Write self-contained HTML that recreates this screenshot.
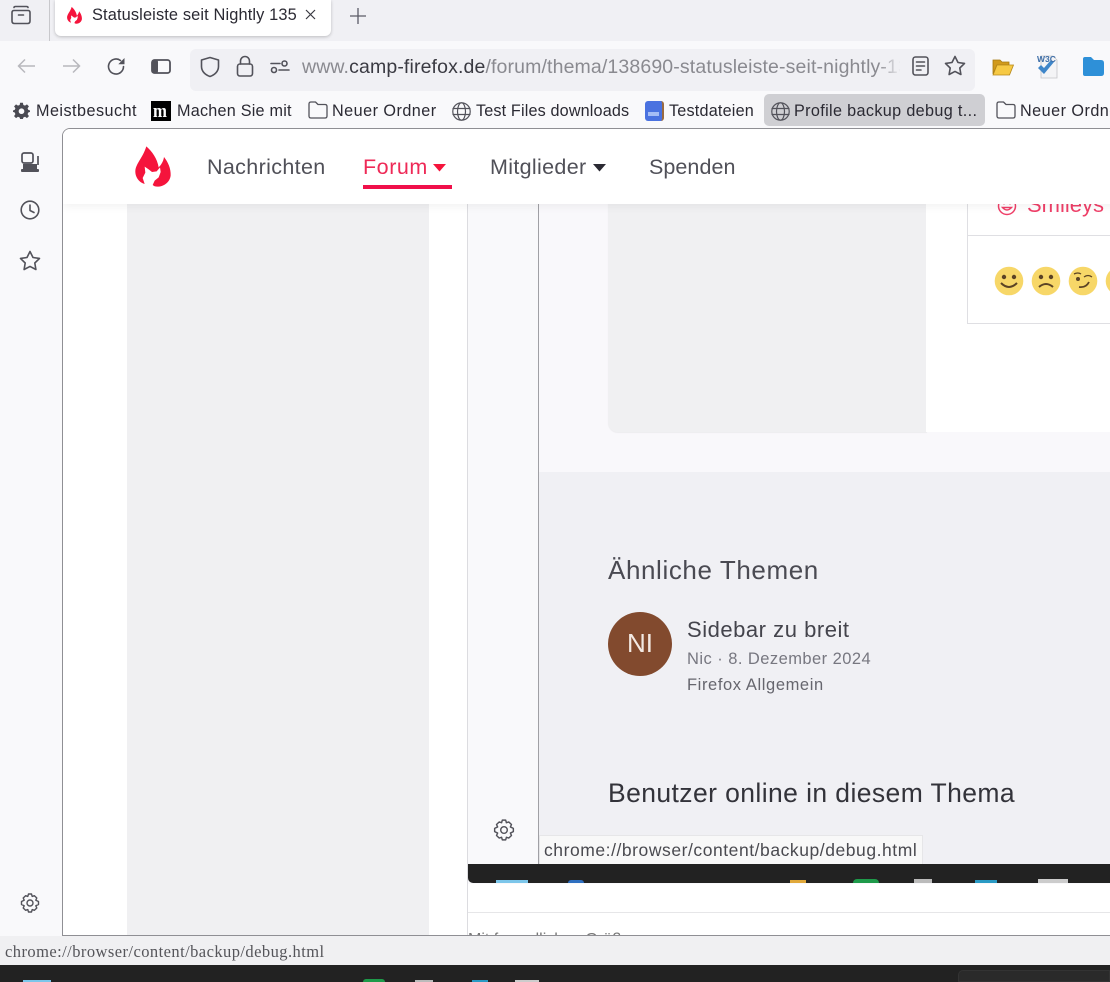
<!DOCTYPE html>
<html lang="de"><head><meta charset="utf-8"><title>Statusleiste seit Nightly 135</title>
<style>
html,body{margin:0;padding:0;width:1110px;height:982px;overflow:hidden;background:#f9f9fb}
*{box-sizing:border-box}
.a{position:absolute}
.t{position:absolute;white-space:nowrap;font-family:"Liberation Sans",sans-serif;line-height:1}
svg{position:absolute;overflow:visible}
.i{fill:none;stroke:#52525a;stroke-width:1.6;stroke-linecap:round;stroke-linejoin:round}
</style></head><body>
<div id="root" class="a" style="left:0;top:0;width:1110px;height:982px;overflow:hidden">
<!-- tab strip -->
<div class="a" style="left:0;top:0;width:1110px;height:41px;background:#f0f0f4"></div>
<svg style="left:11px;top:5px" width="20" height="20" viewBox="0 0 20 20"><path class="i" d="M1 7.5 V16 Q1 18.5 3.5 18.5 H16.5 Q19 18.5 19 16 V7.5 Q19 5.5 17 5.5 H3 Q1 5.5 1 7.5Z M3 2.5 Q3 1.5 4.5 1.5 H15.5 Q17 1.5 17 2.5 M7.5 10 H12.5"/></svg>
<div class="a" style="left:49px;top:0;width:1px;height:41px;background:#c8c8cc"></div>
<div class="a" style="left:55px;top:0;width:276px;height:36px;background:#fff;border-radius:0 0 6px 6px;box-shadow:0 1px 3px rgba(0,0,0,.22)"></div>
<svg style="left:64px;top:5px" width="21" height="21" viewBox="0 0 150 150"><path fill="#f5143c" d="M55 13C72 28 88 50 92 76C100 68 106 58 108 45C120 60 129 80 128 100C126 120 108 134 88 134C82 134 77 132 74 129L80 116L92 106L98 90L96 76L86 88L72 90L62 82L50 74L52 92L44 108L50 126C34 122 21 106 22 86C24 64 44 48 55 13Z"/></svg>
<div class="t" style="left:92px;top:7px;font-size:16.4px;color:#2b2a33;letter-spacing:.12px;width:206px;overflow:hidden;height:18px">Statusleiste seit Nightly 135</div>
<svg style="left:305px;top:9px" width="11" height="11" viewBox="0 0 11 11"><path d="M1 1L10 10M10 1L1 10" stroke="#3a3a42" stroke-width="1.2"/></svg>
<svg style="left:350px;top:8px" width="16" height="16" viewBox="0 0 16 16"><path d="M8 0V16M0 8H16" stroke="#5b5b66" stroke-width="1.3"/></svg>

<!-- nav toolbar -->
<div class="a" style="left:0;top:41px;width:1110px;height:51px;background:#f9f9fb"></div>
<svg style="left:17px;top:58px" width="19" height="16" viewBox="0 0 19 16"><path d="M18 8H1.5M8 1.5L1.5 8L8 14.5" fill="none" stroke="#b8b8bd" stroke-width="1.5"/></svg>
<svg style="left:62px;top:58px" width="19" height="16" viewBox="0 0 19 16"><path d="M1 8H17.5M11 1.5L17.5 8L11 14.5" fill="none" stroke="#b8b8bd" stroke-width="1.5"/></svg>
<svg style="left:107px;top:57px" width="19" height="19" viewBox="0 0 19 19"><path class="i" d="M16.5 9.5A7.5 7.5 0 1 1 13.5 3.5"/><path d="M17.5 1V7.2H11.3Z" fill="#52525a"/></svg>
<svg style="left:151px;top:59px" width="20" height="15" viewBox="0 0 20 15"><rect x="1" y="1" width="18" height="13" rx="2.5" fill="#f9f9fb" stroke="#52525a" stroke-width="1.8"/><rect x="1" y="1" width="6" height="13" rx="2" fill="#52525a"/></svg>
<!-- urlbar -->
<div class="a" style="left:190px;top:49px;width:785px;height:42px;background:#f0f0f4;border-radius:6px"></div>
<svg style="left:200px;top:56px" width="20" height="22" viewBox="0 0 20 22"><path class="i" d="M10 1.5L18.5 4V10.5C18.5 15.5 14.5 19 10 20.5C5.5 19 1.5 15.5 1.5 10.500V4Z"/></svg>
<svg style="left:236px;top:55px" width="18" height="22" viewBox="0 0 18 22"><rect x="1.5" y="9" width="15" height="12" rx="2.500" class="i"/><path class="i" d="M4.500 9V6A4.500 4.500 0 0 1 13.500 6V9"/></svg>
<svg style="left:270px;top:59px" width="20" height="16" viewBox="0 0 20 16"><circle cx="14.500" cy="4.500" r="2.500" class="i"/><circle cx="4" cy="11" r="2.500" class="i"/><path class="i" d="M1 4.500H10M9 11H19"/></svg>
<div class="t" style="left:302px;top:58px;width:598px;height:23px;overflow:hidden;font-size:19.5px;color:#8a8a90;letter-spacing:.13px">www.<span style="color:#3a3a42">camp-firefox.de</span>/forum/thema/138690-statusleiste-seit-nightly-135-nicht-mehr-sichtbar</div>
<div class="a" style="left:878px;top:52px;width:23px;height:36px;background:linear-gradient(90deg,rgba(240,240,244,0),#f0f0f4)"></div>
<svg style="left:912px;top:56px" width="17" height="20" viewBox="0 0 17 20"><rect x="1" y="1" width="15" height="18" rx="2.500" class="i"/><path class="i" d="M4.500 6H12.500M4.500 10H12.500M4.500 14H9"/></svg>
<svg style="left:944px;top:55px" width="22" height="21" viewBox="0 0 22 21"><path class="i" d="M11 1.500L14 7.500L20.500 8.400L15.800 13L16.900 19.500L11 16.400L5.100 19.500L6.200 13L1.500 8.400L8 7.500Z"/></svg>
<svg style="left:992px;top:57px" width="22" height="19" viewBox="0 0 22 19"><path d="M1 3H8L10 5H17V8H5L1 17Z" fill="#d19a1c" stroke="#a67a10" stroke-width=".8"/><path d="M5 8H21.500L17.500 18H1Z" fill="#f6c944" stroke="#b5871a" stroke-width=".8"/></svg>
<svg style="left:1036px;top:54px" width="22" height="24" viewBox="0 0 22 24"><path d="M5 2H17L21 6V24H5Z" fill="#f4f4f6" stroke="#c4c4c8" stroke-width=".8"/><path d="M2 14L8 20L18 8L15 6L8 14L5 11Z" fill="#3f86c9"/></svg>
<div class="t" style="left:1037px;top:55px;font-size:8.500px;font-weight:bold;color:#3f6fa8">W3C</div>
<svg style="left:1082px;top:56px" width="22" height="20" viewBox="0 0 22 20"><path d="M1 3Q1 1 3 1H9L12 4H19Q22 4 22 7V17Q22 20 19 20H3Q1 20 1 18Z" fill="#2e90d8"/></svg>

<!-- bookmarks -->
<svg style="left:13px;top:102px" width="17" height="17" viewBox="0 0 24 24"><path fill="#4a4a52" d="M10 1H14L14.600 4.200L17 5.200L19.700 3.300L22.500 6.100L20.600 8.800L21.600 11.200L24 12V14L21.600 14.800L20.600 17.200L22.500 19.900L19.700 22.700L17 20.800L14.600 21.800L14 24H10L9.400 21.800L7 20.800L4.300 22.700L1.500 19.900L3.400 17.200L2.400 14.800L0 14V12L2.400 11.200L3.400 8.800L1.500 6.100L4.300 3.300L7 5.200L9.400 4.200ZM12 9A4 4 0 1 0 12 17A4 4 0 1 0 12 9Z"/></svg>
<div class="t" style="left:36px;top:103px;font-size:16.200px;color:#2b2a33;letter-spacing:.47px">Meistbesucht</div>
<div class="a" style="left:151px;top:101px;width:20px;height:20px;background:#000"></div>
<div class="t" style="left:153px;top:102px;font-family:'Liberation Serif',serif;font-weight:bold;font-size:19px;color:#fff;transform:scaleX(.88);transform-origin:left">m</div>
<div class="t" style="left:177px;top:103px;font-size:16.200px;color:#2b2a33;letter-spacing:.23px">Machen Sie mit</div>
<svg style="left:308px;top:101px" width="20" height="18" viewBox="0 0 20 18"><path class="i" style="stroke-width:1.300" d="M1 3Q1 1 3 1H7.500L10 3.500H17Q19 3.500 19 5.500V15Q19 17 17 17H3Q1 17 1 15Z"/></svg>
<div class="t" style="left:332px;top:103px;font-size:16.200px;color:#2b2a33;letter-spacing:.47px">Neuer Ordner</div>
<svg style="left:452px;top:102px" width="19" height="19" viewBox="0 0 19 19"><g class="i" style="stroke-width:1.200"><circle cx="9.500" cy="9.500" r="8.700"/><ellipse cx="9.500" cy="9.500" rx="4" ry="8.700"/><path d="M1 6.500H18M1 12.500H18"/></g></svg>
<div class="t" style="left:476px;top:103px;font-size:16.200px;color:#2b2a33;letter-spacing:.15px">Test Files downloads</div>
<div class="a" style="left:645px;top:101px;width:19px;height:20px;background:#4a72e0;border-radius:3px;border-right:2px solid #9a6a40"></div>
<div class="a" style="left:648px;top:112px;width:11px;height:4px;background:#a5bdf5"></div>
<div class="t" style="left:669px;top:103px;font-size:16.200px;color:#2b2a33;letter-spacing:.2px">Testdateien</div>
<div class="a" style="left:764px;top:94px;width:221px;height:32px;background:#cfcfd3;border-radius:5px"></div>
<svg style="left:771px;top:102px" width="19" height="19" viewBox="0 0 19 19"><g class="i" style="stroke-width:1.200"><circle cx="9.500" cy="9.500" r="8.700"/><ellipse cx="9.500" cy="9.500" rx="4" ry="8.700"/><path d="M1 6.500H18M1 12.500H18"/></g></svg>
<div class="t" style="left:794px;top:103px;font-size:16.200px;color:#2b2a33;letter-spacing:.35px">Profile backup debug t...</div>
<svg style="left:996px;top:101px" width="20" height="18" viewBox="0 0 20 18"><path class="i" style="stroke-width:1.300" d="M1 3Q1 1 3 1H7.500L10 3.500H17Q19 3.500 19 5.500V15Q19 17 17 17H3Q1 17 1 15Z"/></svg>
<div class="t" style="left:1020px;top:103px;font-size:16.200px;color:#2b2a33;letter-spacing:.47px">Neuer Ordner</div>

<!-- outer sidebar -->
<div class="a" style="left:0;top:128px;width:62px;height:807px;background:#f9f9fb"></div>
<svg style="left:20px;top:151px" width="20" height="22" viewBox="0 0 20 22"><rect x="2" y="2" width="11" height="10" rx="2" class="i" style="stroke-width:1.700"/><path d="M18 5V14" stroke="#52525a" stroke-width="1.700"/><rect x="3" y="13" width="14" height="6" fill="#52525a"/><rect x="1" y="18" width="18" height="3" rx="1" fill="#52525a"/></svg>
<svg style="left:20px;top:200px" width="20" height="20" viewBox="0 0 20 20"><circle cx="10" cy="10" r="8.800" class="i"/><path class="i" d="M10 5V10.500L14 12.500"/></svg>
<svg style="left:19px;top:250px" width="22" height="21" viewBox="0 0 22 21"><path class="i" d="M11 1.500L14 7.500L20.500 8.400L15.800 13L16.900 19.500L11 16.400L5.100 19.500L6.200 13L1.500 8.400L8 7.500Z"/></svg>
<svg style="left:20px;top:893px" width="20" height="20" viewBox="0 0 20 20"><circle cx="10" cy="10" r="3" class="i" style="stroke-width:1.400"/><path class="i" style="stroke-width:1.400" d="M8.500 1H11.500L12.200 3.400L14.400 2.700L16.800 5L15.800 7.200L18.500 8.500V11.500L15.800 12.800L16.800 15L14.400 17.300L12.200 16.600L11.500 19H8.500L7.800 16.600L5.600 17.300L3.200 15L4.200 12.800L1.500 11.500V8.500L4.200 7.200L3.200 5L5.600 2.700L7.800 3.400Z"/></svg>

<!-- browser content -->
<div class="a" id="content" style="left:62px;top:128px;width:1060px;height:808px;background:#fff;border:1px solid #8f8f94;border-radius:8px 0 0 0;overflow:hidden">
  <div class="a" style="left:64px;top:75px;width:302px;height:740px;background:#f0f0f2"></div>
  <!-- embedded screenshot -->
  <div class="a" style="left:404px;top:75px;width:660px;height:680px;background:#f9f9fb"></div>
  <div class="a" style="left:404px;top:75px;width:1px;height:740px;background:#dcdce0"></div>
  <div class="a" style="left:475px;top:75px;width:1px;height:660px;background:#a0a0a5"></div>
  <div class="a" style="left:476px;top:75px;width:600px;height:268px;background:#f9f8fb"></div>
  <div class="a" style="left:545px;top:60px;width:319px;height:243px;background:#f0f0f2;border-radius:0 0 0 10px;box-shadow:0 1px 1px rgba(0,0,0,.05)"></div>
  <div class="a" style="left:863px;top:60px;width:200px;height:243px;background:#fff"></div>
  <div class="a" style="left:904px;top:60px;width:200px;height:135px;border:1px solid #dfdfe3;background:#fff"></div>
  <div class="a" style="left:904px;top:106px;width:200px;height:1px;background:#dfdfe3"></div>
  <svg style="left:934px;top:67px" width="20" height="20" viewBox="0 0 20 20"><circle cx="10" cy="10" r="8.500" fill="none" stroke="#ef3f68" stroke-width="1.500"/><path d="M5.500 11.500Q10 16.500 14.500 11.500Z" fill="none" stroke="#ef3f68" stroke-width="1.400"/><circle cx="7" cy="7.500" r="1" fill="#ef3f68"/><circle cx="13" cy="7.500" r="1" fill="#ef3f68"/></svg>
  <div class="t" style="left:964px;top:65px;font-size:22px;color:#ef3f68;letter-spacing:0">Smileys</div>
  <svg style="left:931px;top:137px" width="120" height="30" viewBox="0 0 120 30">
    <circle cx="15" cy="15" r="14.300" fill="#f7d768"/><circle cx="10" cy="11" r="2.200" fill="#5b4325"/><circle cx="20" cy="11" r="2.200" fill="#5b4325"/><path d="M7 17Q15 25 23 17" fill="none" stroke="#5b4325" stroke-width="2"/>
    <circle cx="52" cy="15" r="14.300" fill="#f7d768"/><circle cx="47" cy="11" r="2.200" fill="#5b4325"/><circle cx="57" cy="11" r="2.200" fill="#5b4325"/><path d="M45 21Q52 15 59 21" fill="none" stroke="#5b4325" stroke-width="2"/>
    <circle cx="89" cy="15" r="14.300" fill="#f7d768"/><circle cx="84" cy="13" r="2" fill="#5b4325"/><path d="M90 11Q94 8 98 11M80 8Q84 6 87 8" fill="none" stroke="#5b4325" stroke-width="1.300"/><path d="M85 21Q92 22 95 16" fill="none" stroke="#5b4325" stroke-width="1.800"/>
    <circle cx="126" cy="15" r="14.300" fill="#f7d768"/>
  </svg>
  <div class="a" style="left:476px;top:343px;width:600px;height:392px;background:#f0f0f4"></div>
  <div class="t" style="left:545px;top:428px;font-size:26px;color:#4a4a52;letter-spacing:.6px">Ähnliche Themen</div>
  <div class="a" style="left:545px;top:483px;width:64px;height:64px;border-radius:50%;background:#824a2e"></div>
  <div class="t" style="left:564px;top:501px;font-size:26px;color:#f3e9e3">NI</div>
  <div class="t" style="left:624px;top:490px;font-size:22px;color:#44444c;letter-spacing:.53px">Sidebar zu breit</div>
  <div class="t" style="left:624px;top:522px;font-size:16.500px;color:#777780;letter-spacing:.45px">Nic · 8. Dezember 2024</div>
  <div class="t" style="left:624px;top:548px;font-size:16.500px;color:#66666e;letter-spacing:.6px">Firefox Allgemein</div>
  <div class="t" style="left:545px;top:651px;font-size:26.500px;color:#33333a;letter-spacing:.41px">Benutzer online in diesem Thema</div>
  <svg style="left:430px;top:690px" width="22" height="22" viewBox="0 0 20 20"><circle cx="10" cy="10" r="3" class="i" style="stroke-width:1.300"/><path class="i" style="stroke-width:1.300" d="M8.500 1H11.500L12.200 3.400L14.400 2.700L16.800 5L15.800 7.200L18.500 8.500V11.500L15.800 12.800L16.800 15L14.400 17.300L12.200 16.600L11.500 19H8.500L7.800 16.600L5.600 17.300L3.200 15L4.200 12.800L1.500 11.500V8.500L4.200 7.200L3.200 5L5.600 2.700L7.800 3.400Z"/></svg>
  <div class="a" style="left:476px;top:706px;width:384px;height:29px;background:#f8f8f8;border:1px solid #e6e6e8;border-bottom:0"></div>
  <div class="t" style="left:481px;top:713px;font-size:17.500px;color:#4a4a50;letter-spacing:.55px">chrome://browser/content/backup/debug.html</div>
  <div class="a" style="left:405px;top:735px;width:660px;height:19px;background:#222;border-radius:0 0 0 5px;overflow:hidden">
    <div class="a" style="left:28px;top:16px;width:32px;height:6px;background:#7cc6ea"></div>
    <div class="a" style="left:100px;top:16px;width:16px;height:6px;border-radius:8px;background:#2e6fc0"></div>
    <div class="a" style="left:322px;top:16px;width:16px;height:6px;background:#e0a83a"></div>
    <div class="a" style="left:385px;top:15px;width:26px;height:8px;border-radius:13px;background:#1e9a4a"></div>
    <div class="a" style="left:446px;top:15px;width:18px;height:8px;background:#bbb"></div>
    <div class="a" style="left:507px;top:16px;width:22px;height:5px;background:#2a9ac4"></div>
    <div class="a" style="left:570px;top:15px;width:30px;height:8px;background:#ccc"></div>
  </div>
  <div class="a" style="left:405px;top:783px;width:660px;height:1px;background:#e6e6e8"></div>
  <div class="t" style="left:405px;top:803px;font-size:16px;color:#777">Mit freundlichen Grüßen</div>
  <!-- sticky header -->
  <div class="a" style="left:0;top:0;width:1060px;height:75px;background:#fff;box-shadow:0 3px 8px rgba(0,0,0,.05)"></div>
  <svg style="left:65px;top:13px" width="50" height="50" viewBox="0 0 150 150"><path fill="#f5143c" d="M55 13C72 28 88 50 92 76C100 68 106 58 108 45C120 60 129 80 128 100C126 120 108 134 88 134C82 134 77 132 74 129L80 116L92 106L98 90L96 76L86 88L72 90L62 82L50 74L52 92L44 108L50 126C34 122 21 106 22 86C24 64 44 48 55 13Z"/></svg>
  <div class="t" style="left:144px;top:28px;font-size:21.500px;color:#505058;letter-spacing:.35px">Nachrichten</div>
  <div class="t" style="left:300px;top:28px;font-size:21.500px;color:#ee2a57;letter-spacing:.55px">Forum</div>
  <svg style="left:370px;top:35px" width="13" height="8" viewBox="0 0 13 8"><path d="M0 0H13L6.500 7.500Z" fill="#f5143c"/></svg>
  <div class="a" style="left:300px;top:56px;width:89px;height:3.500px;background:#f0104a"></div>
  <div class="t" style="left:427px;top:28px;font-size:21.500px;color:#505058;letter-spacing:.33px">Mitglieder</div>
  <svg style="left:530px;top:35px" width="13" height="8" viewBox="0 0 13 8"><path d="M0 0H13L6.500 7.500Z" fill="#2b2a33"/></svg>
  <div class="t" style="left:586px;top:28px;font-size:21.500px;color:#505058;letter-spacing:.06px">Spenden</div>
</div>

<!-- status -->
<div class="a" style="left:0;top:936px;width:1110px;height:29px;background:#f0f0f2"></div>
<div class="t" style="left:5px;top:944px;font-family:'Liberation Serif',serif;font-size:16.500px;color:#55555a;letter-spacing:.44px">chrome://browser/content/backup/debug.html</div>
<!-- taskbar -->
<div class="a" style="left:0;top:965px;width:1110px;height:17px;background:#222"></div>
<div class="a" style="left:23px;top:980px;width:28px;height:2px;background:#7cc6ea"></div>
<div class="a" style="left:363px;top:979px;width:22px;height:3px;border-radius:11px 11px 0 0;background:#1e9a4a"></div>
<div class="a" style="left:415px;top:980px;width:18px;height:2px;background:#bbb"></div>
<div class="a" style="left:472px;top:980px;width:16px;height:2px;background:#2a9ac4"></div>
<div class="a" style="left:515px;top:980px;width:24px;height:2px;background:#ccc"></div>
<div class="a" style="left:958px;top:970px;width:152px;height:12px;background:#2a2a2a;border-radius:5px 0 0 0;border:1px solid #333"></div>
</div>
</body></html>
